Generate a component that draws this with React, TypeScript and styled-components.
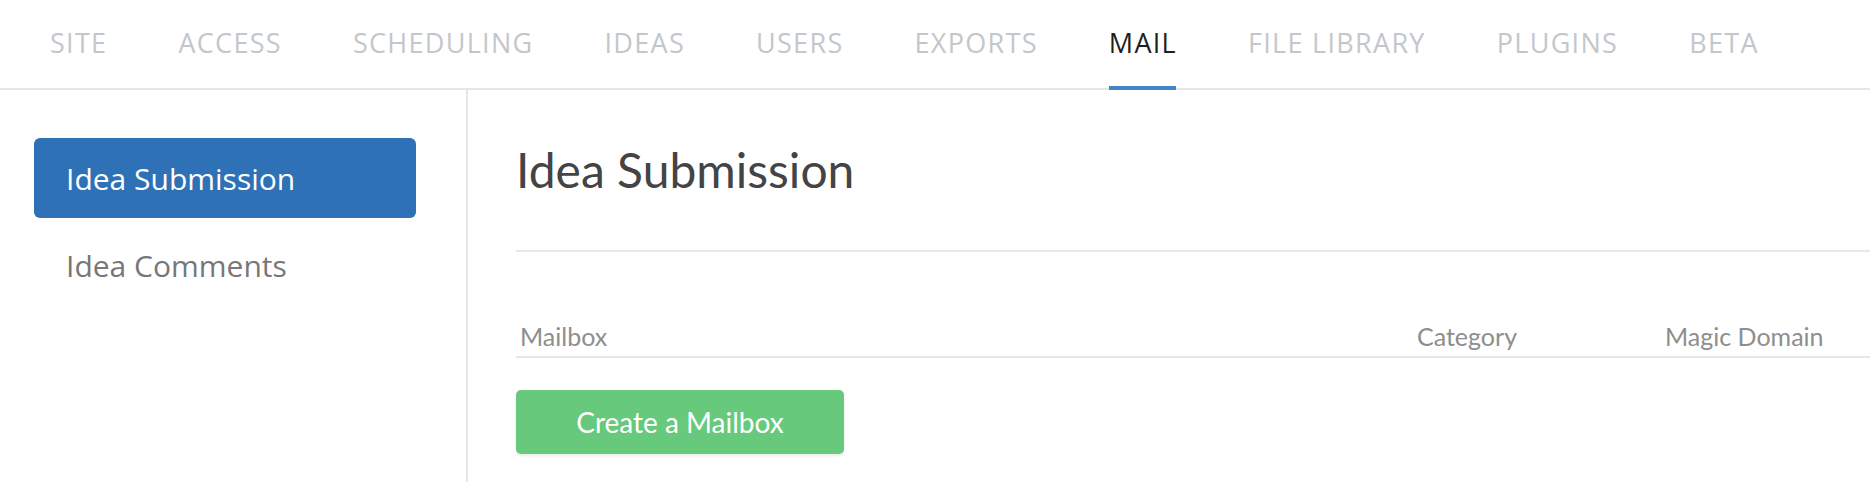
import { FC } from 'react';
import styled, { createGlobalStyle } from 'styled-components';

const GlobalStyle = createGlobalStyle`
    html, body {
        margin: 0;
        padding: 0;
        background: #ffffff;
        overflow: hidden;
    }

    body {
        font-family: 'Open Sans', 'Liberation Sans', sans-serif;
        -webkit-font-smoothing: antialiased;
    }
`;

const tabs = [
    'SITE',
    'ACCESS',
    'SCHEDULING',
    'IDEAS',
    'USERS',
    'EXPORTS',
    'MAIL',
    'FILE LIBRARY',
    'PLUGINS',
    'BETA',
];

const mailboxes = ['Idea Submission', 'Idea Comments'];

const Page = styled.div`
    width: 1870px;
    height: 482px;
    display: flex;
    flex-direction: column;
`;

const TopNav = styled.nav`
    display: flex;
    align-items: stretch;
    gap: 71px;
    height: 88px;
    padding: 0 0 0 50px;
    border-bottom: 2px solid #e6e6e6;
`;

const Tab = styled.a<{ $active?: boolean }>`
    position: relative;
    display: flex;
    align-items: center;
    padding-bottom: 3px;
    font-size: 27px;
    letter-spacing: 1.3px;
    color: ${(p) => (p.$active ? '#1f1f1f' : '#c3c7cb')};
    text-decoration: none;
    cursor: pointer;

    &::after {
        content: '';
        display: ${(p) => (p.$active ? 'block' : 'none')};
        position: absolute;
        left: 0;
        right: 1px;
        bottom: -2px;
        height: 4px;
        background: #4485c6;
    }
`;

const Body = styled.div`
    flex: 1;
    display: flex;
    min-height: 0;
`;

const Sidebar = styled.aside`
    width: 382px;
    flex-shrink: 0;
    display: flex;
    flex-direction: column;
    gap: 7px;
    padding: 48px 50px 0 34px;
    border-right: 2px solid #e6e6e6;
`;

const SideItem = styled.div<{ $active?: boolean }>`
    display: flex;
    align-items: center;
    height: 80px;
    padding-left: 32px;
    border-radius: 6px;
    font-size: 30px;
    color: ${(p) => (p.$active ? '#ffffff' : '#777777')};
    background: ${(p) => (p.$active ? '#2e71b6' : 'transparent')};
    cursor: pointer;
`;

const Main = styled.main`
    flex: 1;
    min-width: 0;
    padding-left: 48px;
`;

const Title = styled.h1`
    margin: 0;
    padding: 51px 0 52px;
    border-bottom: 2px solid #e8e8e8;
    font-family: Lato, 'Open Sans', sans-serif;
    font-size: 48px;
    font-weight: 400;
    line-height: 57px;
    color: #444444;
`;

const Table = styled.div`
    margin-top: 69px;
`;

const HeaderRow = styled.div`
    display: grid;
    grid-template-columns: 897px 248px 1fr;
    padding-bottom: 5px;
    border-bottom: 2px solid #e6e6e6;
`;

const HeaderCell = styled.div`
    padding-left: 4px;
    font-family: Lato, 'Open Sans', sans-serif;
    font-size: 25px;
    line-height: 30px;
    color: #8e8e8e;
    white-space: nowrap;
`;

const CreateButton = styled.button`
    display: flex;
    align-items: center;
    justify-content: center;
    width: 328px;
    height: 64px;
    margin-top: 32px;
    padding: 0;
    border: none;
    border-radius: 5px;
    background: #67c97b;
    box-shadow: 0 2px 3px rgba(0, 0, 0, 0.08);
    font-family: Lato, 'Open Sans', sans-serif;
    font-size: 28px;
    color: #ffffff;
    cursor: pointer;
`;

const App: FC = () => {
    return (
        <Page>
            <GlobalStyle />
            <TopNav>
                {tabs.map((t) => (
                    <Tab key={t} $active={t === 'MAIL'}>
                        {t}
                    </Tab>
                ))}
            </TopNav>
            <Body>
                <Sidebar>
                    {mailboxes.map((m, i) => (
                        <SideItem key={m} $active={i === 0}>
                            {m}
                        </SideItem>
                    ))}
                </Sidebar>
                <Main>
                    <Title>Idea Submission</Title>
                    <Table>
                        <HeaderRow>
                            <HeaderCell>Mailbox</HeaderCell>
                            <HeaderCell>Category</HeaderCell>
                            <HeaderCell>Magic Domain</HeaderCell>
                        </HeaderRow>
                        <CreateButton>Create a Mailbox</CreateButton>
                    </Table>
                </Main>
            </Body>
        </Page>
    );
};

export default App;
